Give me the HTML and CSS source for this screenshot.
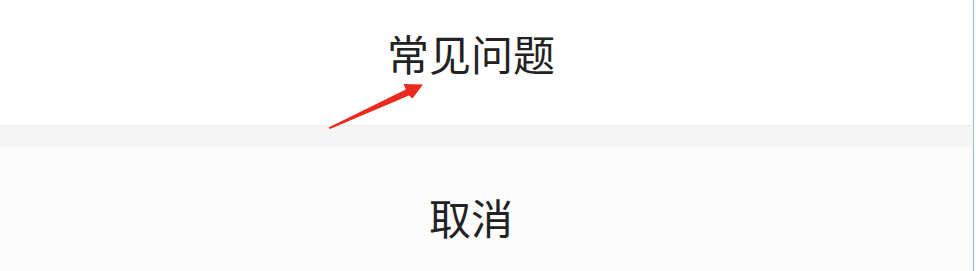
FILE: index.html
```html
<!DOCTYPE html>
<html lang="zh">
<head>
<meta charset="utf-8">
<link rel="stylesheet" href="styles.css">
</head>
<body>
<div class="screen">
  <div class="sheet">
    <div class="item item-top"><span class="label">常见问题</span></div>
    <div class="gap"></div>
    <div class="item item-cancel"><span class="label">取消</span></div>
  </div>
  <div class="edge"></div>
  <svg class="arrow" width="976" height="271" viewBox="0 0 976 271">
    <polygon points="328.5,127.6 330,129 409,95.6 412.5,98.6 423,84.5 403.5,84 405.8,89.4" fill="#ea2a1f"/>
  </svg>
</div>
</body>
</html>
```
FILE: styles.css
```css
html, body {
  margin: 0;
  padding: 0;
  background: #ffffff;
}
.screen {
  position: relative;
  width: 976px;
  height: 271px;
  overflow: hidden;
  display: flex;
  font-family: "Noto Sans CJK SC", "Noto Sans", sans-serif;
}
.sheet {
  width: 974px;
  display: flex;
  flex-direction: column;
}
.item {
  display: flex;
  justify-content: center;
  box-sizing: border-box;
  padding-right: 32px;
}
.label {
  font-size: 42px;
  line-height: 42px;
  color: #222222;
}
.item-top {
  height: 125px;
  padding-top: 32px;
  background: #ffffff;
}
.gap {
  height: 22px;
  background: #f5f5f5;
  border-top: 1px solid #ececec;
  box-sizing: border-box;
  margin-right: 2px;
}
.item-cancel {
  flex: 1;
  padding-top: 49px;
  background: #fcfcfc;
}
.edge {
  width: 1px;
  margin-left: -1px;
  background: #8fc3dd;
}
.arrow {
  position: absolute;
  left: 0;
  top: 0;
  pointer-events: none;
}
```
